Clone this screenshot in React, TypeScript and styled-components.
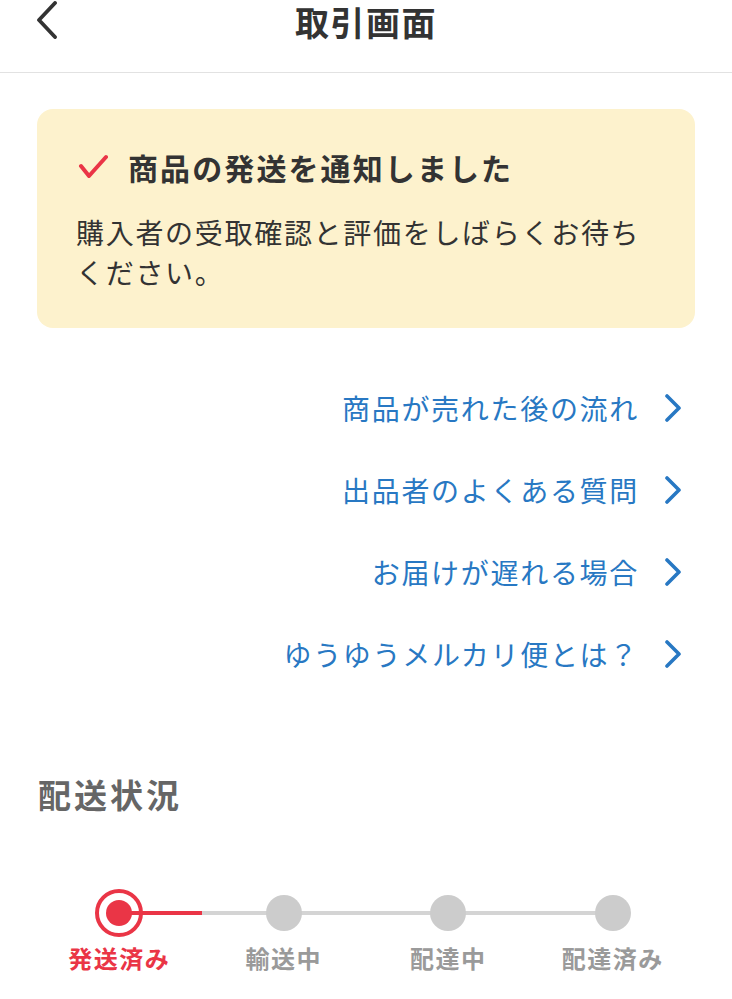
import React from "react";
import styled, { createGlobalStyle } from "styled-components";

const GlobalStyle = createGlobalStyle`
  html, body {
    margin: 0;
    padding: 0;
    background: #ffffff;
  }
  body {
    font-family: "Noto Sans CJK JP", "Noto Sans", sans-serif;
    color: #333333;
  }
  * {
    box-sizing: border-box;
  }
`;

const Page = styled.div`
  width: 732px;
  min-height: 999px;
  background: #ffffff;
`;

const Header = styled.header`
  position: relative;
  height: 73px;
  border-bottom: 1px solid #e2e2e2;
  display: flex;
  justify-content: center;
  align-items: flex-start;
`;

const BackButton = styled.button`
  position: absolute;
  left: 33px;
  top: 0;
  width: 28px;
  height: 40px;
  padding: 0;
  border: none;
  background: none;
  display: flex;
  align-items: center;
  justify-content: center;
`;

const HeaderTitle = styled.h1`
  margin: 0;
  font-size: 34px;
  line-height: 44px;
  font-weight: 700;
  letter-spacing: 1.5px;
  color: #333333;
`;

const Content = styled.main`
  padding: 36px 37px 0;
`;

const Notice = styled.section`
  background: #fdf2cd;
  border-radius: 16px;
  padding: 38px 39px 36px;
`;

const NoticeTitle = styled.div`
  display: flex;
  align-items: center;
  gap: 20px;
  font-size: 30px;
  line-height: 40px;
  font-weight: 700;
  letter-spacing: 2.1px;
  color: #333333;
  margin-bottom: 25px;
  padding-left: 2px;
`;

const NoticeBody = styled.p`
  margin: 0;
  font-size: 28px;
  line-height: 40px;
  letter-spacing: 1.7px;
  color: #333333;
`;

const LinkList = styled.nav`
  margin-top: 39px;
  display: flex;
  flex-direction: column;
`;

const LinkRow = styled.a`
  height: 82px;
  display: flex;
  align-items: center;
  justify-content: flex-end;
  gap: 25px;
  padding-right: 13px;
  font-size: 28px;
  letter-spacing: 1.7px;
  color: #2878c3;
  text-decoration: none;
`;

const SectionTitle = styled.h2`
  margin: 77px 0 0;
  padding-left: 1px;
  font-size: 33px;
  line-height: 44px;
  font-weight: 700;
  letter-spacing: 3px;
  color: #666666;
`;

const Stepper = styled.ol`
  list-style: none;
  margin: 73px 0 0;
  padding: 0;
  display: grid;
  grid-template-columns: repeat(4, 1fr);
`;

const Step = styled.li`
  display: flex;
  flex-direction: column;
  align-items: center;
  gap: 5px;
`;

const Track = styled.div<{ $left?: string; $right?: string }>`
  position: relative;
  width: 100%;
  height: 48px;
  display: flex;
  align-items: center;
  justify-content: center;

  &::before,
  &::after {
    content: "";
    position: absolute;
    top: 22px;
    height: 4px;
    width: 50%;
  }
  &::before {
    left: 0;
    background: ${(p) => p.$left || "transparent"};
  }
  &::after {
    right: 0;
    background: ${(p) => p.$right || "transparent"};
  }
`;

const Dot = styled.span<{ $active?: boolean }>`
  position: relative;
  z-index: 1;
  border-radius: 50%;
  display: flex;
  align-items: center;
  justify-content: center;
  width: ${(p) => (p.$active ? "48px" : "36px")};
  height: ${(p) => (p.$active ? "48px" : "36px")};
  background: ${(p) => (p.$active ? "transparent" : "#cccccc")};
  border: ${(p) => (p.$active ? "4px solid #ea3546" : "none")};

  &::after {
    content: "";
    display: ${(p) => (p.$active ? "block" : "none")};
    width: 26px;
    height: 26px;
    border-radius: 50%;
    background: #ea3546;
  }
`;

const StepLabel = styled.span<{ $active?: boolean }>`
  font-size: 24px;
  line-height: 32px;
  font-weight: 700;
  letter-spacing: 1.5px;
  color: ${(p) => (p.$active ? "#ea3546" : "#9a9a9a")};
`;

const ChevronRight = () => (
  <svg width="18" height="28" viewBox="0 0 18 28" fill="none">
    <path
      d="M3 2 L15 14 L3 26"
      stroke="#2878c3"
      strokeWidth="3.6"
      strokeLinecap="round"
      strokeLinejoin="round"
    />
  </svg>
);

const links = [
  "商品が売れた後の流れ",
  "出品者のよくある質問",
  "お届けが遅れる場合",
  "ゆうゆうメルカリ便とは？",
];

const steps = ["発送済み", "輸送中", "配達中", "配達済み"];
const current = 0;
const RED = "#ea3546";
const GRAY = "#d4d4d4";

export default function App() {
  return (
    <Page>
      <GlobalStyle />
      <Header>
        <BackButton aria-label="戻る">
          <svg width="24" height="38" viewBox="0 0 24 38" fill="none">
            <path
              d="M20 2 L4 19 L20 36"
              stroke="#333333"
              strokeWidth="3.8"
              strokeLinecap="round"
              strokeLinejoin="round"
            />
          </svg>
        </BackButton>
        <HeaderTitle>取引画面</HeaderTitle>
      </Header>

      <Content>
        <Notice>
          <NoticeTitle>
            <svg width="30" height="26" viewBox="0 0 30 26" fill="none">
              <path
                d="M3 12 L11 22 L28 3"
                stroke="#ea3546"
                strokeWidth="4"
                strokeLinecap="round"
                strokeLinejoin="round"
              />
            </svg>
            商品の発送を通知しました
          </NoticeTitle>
          <NoticeBody>
            購入者の受取確認と評価をしばらくお待ち
            <br />
            ください。
          </NoticeBody>
        </Notice>

        <LinkList>
          {links.map((l) => (
            <LinkRow key={l} href="#">
              <span>{l}</span>
              <ChevronRight />
            </LinkRow>
          ))}
        </LinkList>

        <SectionTitle>配送状況</SectionTitle>

        <Stepper>
          {steps.map((s, i) => {
            const left = i === 0 ? undefined : i <= current ? RED : GRAY;
            const right =
              i === steps.length - 1 ? undefined : i <= current ? RED : GRAY;
            return (
              <Step key={s}>
                <Track $left={left} $right={right}>
                  <Dot $active={i === current} />
                </Track>
                <StepLabel $active={i === current}>{s}</StepLabel>
              </Step>
            );
          })}
        </Stepper>
      </Content>
    </Page>
  );
}
